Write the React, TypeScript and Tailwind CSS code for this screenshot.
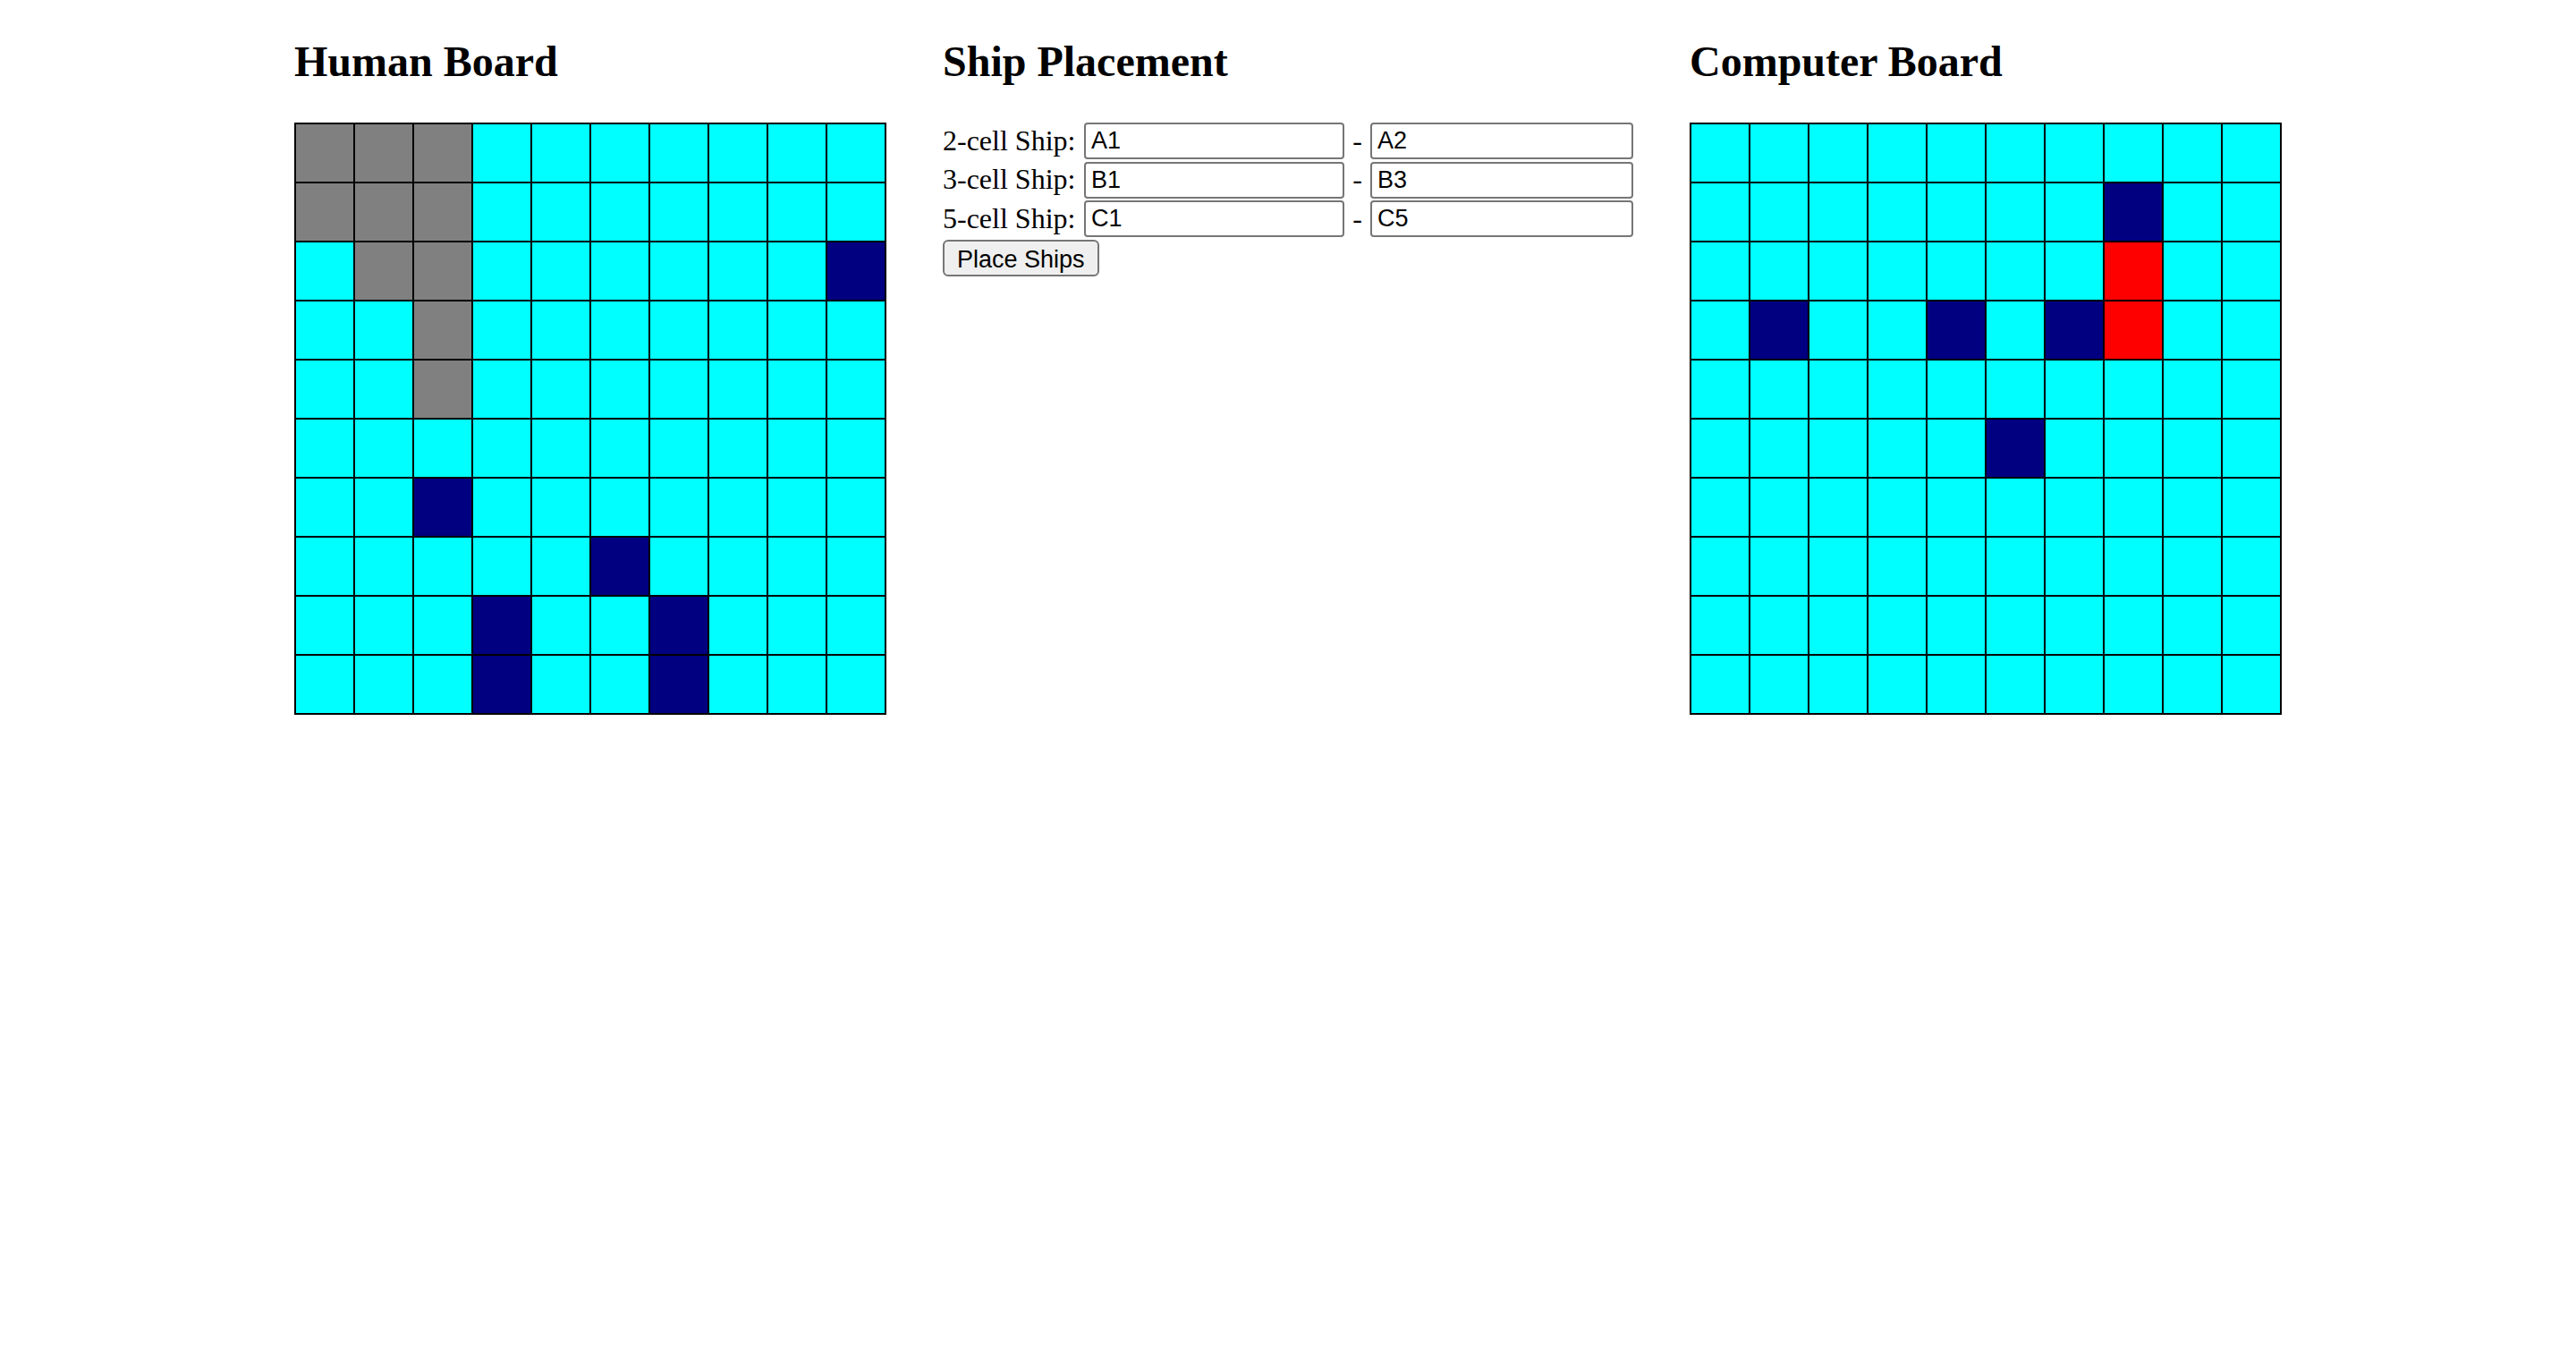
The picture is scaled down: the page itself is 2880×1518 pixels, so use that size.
import React from 'react'

type Cell = 'w' | 's' | 'x' | 'h'

const CELL_BG: Record<Cell, string> = {
  w: 'bg-[#00ffff]',
  s: 'bg-[#808080]',
  x: 'bg-[#000080]',
  h: 'bg-[#ff0000]',
}

// rows top to bottom, w = water, s = own ship, x = miss, h = hit
const HUMAN: string[] = [
  'ssswwwwwww',
  'ssswwwwwww',
  'wsswwwwwwx',
  'wwswwwwwww',
  'wwswwwwwww',
  'wwwwwwwwww',
  'wwxwwwwwww',
  'wwwwwxwwww',
  'wwwxwwxwww',
  'wwwxwwxwww',
]

const COMPUTER: string[] = [
  'wwwwwwwwww',
  'wwwwwwwxww',
  'wwwwwwwhww',
  'wxwwxwxhww',
  'wwwwwwwwww',
  'wwwwwxwwww',
  'wwwwwwwwww',
  'wwwwwwwwww',
  'wwwwwwwwww',
  'wwwwwwwwww',
]

const SHIPS = [
  { label: '2-cell Ship:', start: 'A1', end: 'A2' },
  { label: '3-cell Ship:', start: 'B1', end: 'B3' },
  { label: '5-cell Ship:', start: 'C1', end: 'C5' },
]

const serif = "font-['Liberation_Serif','Times_New_Roman',serif]"
const sans = "font-['Liberation_Sans',Arial,sans-serif]"

function Heading({ children }: { children: React.ReactNode }) {
  return (
    <h2 className={`${serif} text-[48px] leading-[53px] font-bold mt-[42px] mb-[42px] text-black`}>
      {children}
    </h2>
  )
}

function Board({ rows }: { rows: string[] }) {
  return (
    <div className="grid grid-cols-[repeat(10,64px)] gap-[2px] bg-black p-[2px] w-fit">
      {rows.flatMap((row, r) =>
        row.split('').map((c, i) => (
          <div key={`${r}-${i}`} className={`h-[64px] ${CELL_BG[c as Cell]}`} />
        ))
      )}
    </div>
  )
}

function ShipInput({ value, width }: { value: string; width: string }) {
  return (
    <input
      defaultValue={value}
      className={`${sans} ${width} h-[41px] text-[27px] text-black border-2 border-[#767676] rounded-[4px] pl-[6px] bg-white outline-none`}
    />
  )
}

export default function App() {
  return (
    <div className="min-h-screen bg-white flex justify-center gap-[63px] text-black">
      <div className="flex flex-col">
        <Heading>Human Board</Heading>
        <Board rows={HUMAN} />
      </div>

      <div className="flex flex-col w-[772px]">
        <Heading>Ship Placement</Heading>
        <div className="flex flex-col -mt-[1px]">
          {SHIPS.map(s => (
            <div key={s.label} className={`${serif} text-[32px] flex items-center h-[43.5px]`}>
              <span className="w-[158px] whitespace-nowrap -translate-y-[1px]">{s.label}</span>
              <ShipInput value={s.start} width="w-[291px]" />
              <span className="w-[29px] text-center -translate-y-[1px]">-</span>
              <ShipInput value={s.end} width="w-[294px]" />
            </div>
          ))}
          <div className="pt-[1px]">
            <button
              className={`${sans} h-[41px] px-[14px] text-[27px] bg-[#efefef] border-2 border-[#767676] rounded-[6px] text-black`}
            >
              Place Ships
            </button>
          </div>
        </div>
      </div>

      <div className="flex flex-col">
        <Heading>Computer Board</Heading>
        <Board rows={COMPUTER} />
      </div>
    </div>
  )
}
